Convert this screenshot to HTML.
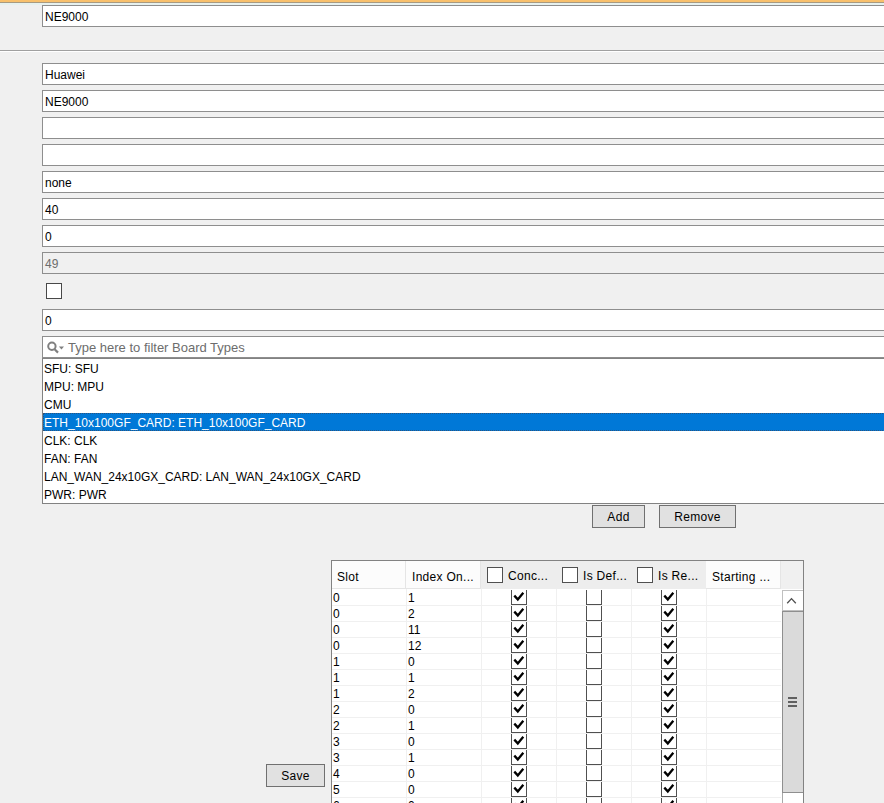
<!DOCTYPE html><html><head><meta charset="utf-8"><style>
*{margin:0;padding:0;box-sizing:border-box}
html,body{width:884px;height:803px;overflow:hidden;background:#f0f0f0;font-family:"Liberation Sans", sans-serif;font-size:12px;color:#000}
.a{position:absolute}
.tf{position:absolute;left:42px;width:900px;height:22px;border:1px solid #8e8e8e;background:#fff;white-space:nowrap}
.tf span{position:absolute;left:2px;top:4px;line-height:15px}
.dis{background:#f0f0f0;color:#6d6d6d}
.li{position:absolute;left:1px;height:18px;width:900px;line-height:20px;padding-left:1px;white-space:nowrap}
.btn{position:absolute;height:23px;border:1px solid #707070;background:#e1e1e1;text-align:center;line-height:23px;letter-spacing:0.3px}
.row{position:absolute;left:332px;width:449px;height:16px;border-bottom:1px solid #f0f0f0}
.c{position:absolute;top:0;height:15px;line-height:17px;white-space:nowrap}
.vl{position:absolute;top:589px;width:1px;height:214px;background:#f0f0f0}
.cb{position:absolute;top:0;width:16px;height:15px;border:1px solid #505050;border-top:none;background:#fff}
.hc{position:absolute;top:561px;height:28px}
.hcb{position:absolute;top:6px;width:16px;height:16px;border:1px solid #505050;background:#fff}
.ht{position:absolute;top:8px;line-height:16px;white-space:nowrap;letter-spacing:0.3px}
</style></head><body>
<div class="a" style="left:0;top:0;width:884px;height:2px;background:#f8c06c"></div>
<div class="a" style="left:0;top:2px;width:884px;height:1px;background:#a89a80"></div>
<div class="a" style="left:0;top:3px;width:884px;height:2px;background:#e6f1ef"></div>
<div class="tf" style="top:5px"><span>NE9000</span></div>
<div class="a" style="left:0;top:50px;width:884px;height:1px;background:#a0a0a0"></div>
<div class="a" style="left:0;top:51px;width:884px;height:1px;background:#fff"></div>
<div class="tf" style="top:63px"><span>Huawei</span></div>
<div class="tf" style="top:90px"><span>NE9000</span></div>
<div class="tf" style="top:117px"><span></span></div>
<div class="tf" style="top:144px"><span></span></div>
<div class="tf" style="top:171px"><span>none</span></div>
<div class="tf" style="top:198px"><span>40</span></div>
<div class="tf" style="top:225px"><span>0</span></div>
<div class="tf dis" style="top:252px"><span>49</span></div>
<div class="a" style="left:46px;top:283px;width:16px;height:16px;border:1px solid #484848;background:#fff"></div>
<div class="tf" style="top:309px"><span>0</span></div>
<div class="tf" style="top:336px"><svg class="a" style="left:3px;top:4px" width="20" height="14" viewBox="0 0 20 14"><circle cx="5.9" cy="5.3" r="3.7" fill="none" stroke="#808080" stroke-width="2"/><line x1="8.6" y1="8.2" x2="12" y2="11.6" stroke="#808080" stroke-width="2.2"/><path d="M12.9 5.5 L18 5.5 L15.45 8.5 Z" fill="#808080"/></svg><span style="left:25px;font-size:13px;color:#6d6d6d;top:3px">Type here to filter Board Types</span></div>
<div class="a" style="left:42px;top:358px;width:900px;height:146px;border:1px solid #828282;background:#fff">
<div class="li" style="left:0;top:0px">SFU: SFU</div>
<div class="li" style="left:0;top:18px">MPU: MPU</div>
<div class="li" style="left:0;top:36px">CMU</div>
<div class="li" style="left:0;top:54px;background:#0078d7;color:#fff;padding-left:0;border:1px dotted #2b5580;line-height:18px">ETH_10x100GF_CARD: ETH_10x100GF_CARD</div>
<div class="li" style="left:0;top:72px">CLK: CLK</div>
<div class="li" style="left:0;top:90px">FAN: FAN</div>
<div class="li" style="left:0;top:108px">LAN_WAN_24x10GX_CARD: LAN_WAN_24x10GX_CARD</div>
<div class="li" style="left:0;top:126px">PWR: PWR</div>
</div>
<div class="btn" style="left:592px;top:505px;width:53px">Add</div>
<div class="btn" style="left:659px;top:505px;width:77px">Remove</div>
<div class="btn" style="left:266px;top:764px;width:59px">Save</div>
<div class="a" style="left:331px;top:560px;width:473px;height:260px;border:1px solid #828282;background:#fff"></div>
<div class="hc" style="left:332px;width:471px;background:#f0f0f0"></div>
<div class="hc" style="left:332px;width:74px;background:#fcfcfc;border-bottom:1px solid #e5e5e5;border-right:1px solid #e5e5e5"><div class="ht" style="left:5px">Slot</div></div>
<div class="hc" style="left:406px;width:75px;background:#fcfcfc;border-bottom:1px solid #e5e5e5;border-right:1px solid #e5e5e5"><div class="ht" style="left:6px">Index On...</div></div>
<div class="hc" style="left:481px;width:75px;background:#ededed"><div class="hcb" style="left:6px"></div><div class="ht" style="left:27px;top:7px">Conc...</div></div>
<div class="hc" style="left:556px;width:75px;background:#ededed"><div class="hcb" style="left:6px"></div><div class="ht" style="left:27px;top:7px">Is Def...</div></div>
<div class="hc" style="left:631px;width:75px;background:#ededed"><div class="hcb" style="left:6px"></div><div class="ht" style="left:27px;top:7px">Is Re...</div></div>
<div class="hc" style="left:706px;width:75px;background:#fcfcfc;border-bottom:1px solid #e5e5e5;border-right:1px solid #e5e5e5"><div class="ht" style="left:6px">Starting ...</div></div>
<div class="row" style="top:590px">
<div class="c" style="left:1px">0</div><div class="c" style="left:76px">1</div>
<div class="cb" style="left:179px">
<svg class="a" style="left:-1px;top:0" width="16" height="15"><path d="M3.3 5.6 L6.8 9.4 L12.3 2.7" fill="none" stroke="#000" stroke-width="2.3"/></svg>
</div>
<div class="cb" style="left:254px">
</div>
<div class="cb" style="left:329px">
<svg class="a" style="left:-1px;top:0" width="16" height="15"><path d="M3.3 5.6 L6.8 9.4 L12.3 2.7" fill="none" stroke="#000" stroke-width="2.3"/></svg>
</div>
</div>
<div class="row" style="top:606px">
<div class="c" style="left:1px">0</div><div class="c" style="left:76px">2</div>
<div class="cb" style="left:179px">
<svg class="a" style="left:-1px;top:0" width="16" height="15"><path d="M3.3 5.6 L6.8 9.4 L12.3 2.7" fill="none" stroke="#000" stroke-width="2.3"/></svg>
</div>
<div class="cb" style="left:254px">
</div>
<div class="cb" style="left:329px">
<svg class="a" style="left:-1px;top:0" width="16" height="15"><path d="M3.3 5.6 L6.8 9.4 L12.3 2.7" fill="none" stroke="#000" stroke-width="2.3"/></svg>
</div>
</div>
<div class="row" style="top:622px">
<div class="c" style="left:1px">0</div><div class="c" style="left:76px">11</div>
<div class="cb" style="left:179px">
<svg class="a" style="left:-1px;top:0" width="16" height="15"><path d="M3.3 5.6 L6.8 9.4 L12.3 2.7" fill="none" stroke="#000" stroke-width="2.3"/></svg>
</div>
<div class="cb" style="left:254px">
</div>
<div class="cb" style="left:329px">
<svg class="a" style="left:-1px;top:0" width="16" height="15"><path d="M3.3 5.6 L6.8 9.4 L12.3 2.7" fill="none" stroke="#000" stroke-width="2.3"/></svg>
</div>
</div>
<div class="row" style="top:638px">
<div class="c" style="left:1px">0</div><div class="c" style="left:76px">12</div>
<div class="cb" style="left:179px">
<svg class="a" style="left:-1px;top:0" width="16" height="15"><path d="M3.3 5.6 L6.8 9.4 L12.3 2.7" fill="none" stroke="#000" stroke-width="2.3"/></svg>
</div>
<div class="cb" style="left:254px">
</div>
<div class="cb" style="left:329px">
<svg class="a" style="left:-1px;top:0" width="16" height="15"><path d="M3.3 5.6 L6.8 9.4 L12.3 2.7" fill="none" stroke="#000" stroke-width="2.3"/></svg>
</div>
</div>
<div class="row" style="top:654px">
<div class="c" style="left:1px">1</div><div class="c" style="left:76px">0</div>
<div class="cb" style="left:179px">
<svg class="a" style="left:-1px;top:0" width="16" height="15"><path d="M3.3 5.6 L6.8 9.4 L12.3 2.7" fill="none" stroke="#000" stroke-width="2.3"/></svg>
</div>
<div class="cb" style="left:254px">
</div>
<div class="cb" style="left:329px">
<svg class="a" style="left:-1px;top:0" width="16" height="15"><path d="M3.3 5.6 L6.8 9.4 L12.3 2.7" fill="none" stroke="#000" stroke-width="2.3"/></svg>
</div>
</div>
<div class="row" style="top:670px">
<div class="c" style="left:1px">1</div><div class="c" style="left:76px">1</div>
<div class="cb" style="left:179px">
<svg class="a" style="left:-1px;top:0" width="16" height="15"><path d="M3.3 5.6 L6.8 9.4 L12.3 2.7" fill="none" stroke="#000" stroke-width="2.3"/></svg>
</div>
<div class="cb" style="left:254px">
</div>
<div class="cb" style="left:329px">
<svg class="a" style="left:-1px;top:0" width="16" height="15"><path d="M3.3 5.6 L6.8 9.4 L12.3 2.7" fill="none" stroke="#000" stroke-width="2.3"/></svg>
</div>
</div>
<div class="row" style="top:686px">
<div class="c" style="left:1px">1</div><div class="c" style="left:76px">2</div>
<div class="cb" style="left:179px">
<svg class="a" style="left:-1px;top:0" width="16" height="15"><path d="M3.3 5.6 L6.8 9.4 L12.3 2.7" fill="none" stroke="#000" stroke-width="2.3"/></svg>
</div>
<div class="cb" style="left:254px">
</div>
<div class="cb" style="left:329px">
<svg class="a" style="left:-1px;top:0" width="16" height="15"><path d="M3.3 5.6 L6.8 9.4 L12.3 2.7" fill="none" stroke="#000" stroke-width="2.3"/></svg>
</div>
</div>
<div class="row" style="top:702px">
<div class="c" style="left:1px">2</div><div class="c" style="left:76px">0</div>
<div class="cb" style="left:179px">
<svg class="a" style="left:-1px;top:0" width="16" height="15"><path d="M3.3 5.6 L6.8 9.4 L12.3 2.7" fill="none" stroke="#000" stroke-width="2.3"/></svg>
</div>
<div class="cb" style="left:254px">
</div>
<div class="cb" style="left:329px">
<svg class="a" style="left:-1px;top:0" width="16" height="15"><path d="M3.3 5.6 L6.8 9.4 L12.3 2.7" fill="none" stroke="#000" stroke-width="2.3"/></svg>
</div>
</div>
<div class="row" style="top:718px">
<div class="c" style="left:1px">2</div><div class="c" style="left:76px">1</div>
<div class="cb" style="left:179px">
<svg class="a" style="left:-1px;top:0" width="16" height="15"><path d="M3.3 5.6 L6.8 9.4 L12.3 2.7" fill="none" stroke="#000" stroke-width="2.3"/></svg>
</div>
<div class="cb" style="left:254px">
</div>
<div class="cb" style="left:329px">
<svg class="a" style="left:-1px;top:0" width="16" height="15"><path d="M3.3 5.6 L6.8 9.4 L12.3 2.7" fill="none" stroke="#000" stroke-width="2.3"/></svg>
</div>
</div>
<div class="row" style="top:734px">
<div class="c" style="left:1px">3</div><div class="c" style="left:76px">0</div>
<div class="cb" style="left:179px">
<svg class="a" style="left:-1px;top:0" width="16" height="15"><path d="M3.3 5.6 L6.8 9.4 L12.3 2.7" fill="none" stroke="#000" stroke-width="2.3"/></svg>
</div>
<div class="cb" style="left:254px">
</div>
<div class="cb" style="left:329px">
<svg class="a" style="left:-1px;top:0" width="16" height="15"><path d="M3.3 5.6 L6.8 9.4 L12.3 2.7" fill="none" stroke="#000" stroke-width="2.3"/></svg>
</div>
</div>
<div class="row" style="top:750px">
<div class="c" style="left:1px">3</div><div class="c" style="left:76px">1</div>
<div class="cb" style="left:179px">
<svg class="a" style="left:-1px;top:0" width="16" height="15"><path d="M3.3 5.6 L6.8 9.4 L12.3 2.7" fill="none" stroke="#000" stroke-width="2.3"/></svg>
</div>
<div class="cb" style="left:254px">
</div>
<div class="cb" style="left:329px">
<svg class="a" style="left:-1px;top:0" width="16" height="15"><path d="M3.3 5.6 L6.8 9.4 L12.3 2.7" fill="none" stroke="#000" stroke-width="2.3"/></svg>
</div>
</div>
<div class="row" style="top:766px">
<div class="c" style="left:1px">4</div><div class="c" style="left:76px">0</div>
<div class="cb" style="left:179px">
<svg class="a" style="left:-1px;top:0" width="16" height="15"><path d="M3.3 5.6 L6.8 9.4 L12.3 2.7" fill="none" stroke="#000" stroke-width="2.3"/></svg>
</div>
<div class="cb" style="left:254px">
</div>
<div class="cb" style="left:329px">
<svg class="a" style="left:-1px;top:0" width="16" height="15"><path d="M3.3 5.6 L6.8 9.4 L12.3 2.7" fill="none" stroke="#000" stroke-width="2.3"/></svg>
</div>
</div>
<div class="row" style="top:782px">
<div class="c" style="left:1px">5</div><div class="c" style="left:76px">0</div>
<div class="cb" style="left:179px">
<svg class="a" style="left:-1px;top:0" width="16" height="15"><path d="M3.3 5.6 L6.8 9.4 L12.3 2.7" fill="none" stroke="#000" stroke-width="2.3"/></svg>
</div>
<div class="cb" style="left:254px">
</div>
<div class="cb" style="left:329px">
<svg class="a" style="left:-1px;top:0" width="16" height="15"><path d="M3.3 5.6 L6.8 9.4 L12.3 2.7" fill="none" stroke="#000" stroke-width="2.3"/></svg>
</div>
</div>
<div class="row" style="top:798px">
<div class="c" style="left:1px">6</div><div class="c" style="left:76px">0</div>
<div class="cb" style="left:179px">
<svg class="a" style="left:-1px;top:0" width="16" height="15"><path d="M3.3 5.6 L6.8 9.4 L12.3 2.7" fill="none" stroke="#000" stroke-width="2.3"/></svg>
</div>
<div class="cb" style="left:254px">
</div>
<div class="cb" style="left:329px">
<svg class="a" style="left:-1px;top:0" width="16" height="15"><path d="M3.3 5.6 L6.8 9.4 L12.3 2.7" fill="none" stroke="#000" stroke-width="2.3"/></svg>
</div>
</div>
<div class="vl" style="left:406px"></div>
<div class="vl" style="left:481px"></div>
<div class="vl" style="left:556px"></div>
<div class="vl" style="left:631px"></div>
<div class="vl" style="left:706px"></div>
<div class="a" style="left:781px;top:589px;width:22px;height:214px;background:#fff"></div>
<div class="a" style="left:782px;top:590px;width:21px;height:21px;border:1px solid #c0c0c0;border-right:none;background:#fff"><svg class="a" style="left:0;top:0" width="19" height="19"><path d="M4.2 12.3 L8.5 7.6 L12.8 12.3" fill="none" stroke="#505050" stroke-width="1.3"/></svg></div>
<div class="a" style="left:782px;top:611px;width:21px;height:182px;border:1px solid #8f8f8f;border-right:none;background:#dadada"><div class="a" style="left:5px;top:85px;width:9px;height:2px;background:#606060"></div><div class="a" style="left:5px;top:89px;width:9px;height:2px;background:#606060"></div><div class="a" style="left:5px;top:93px;width:9px;height:2px;background:#606060"></div></div>
<div class="a" style="left:782px;top:793px;width:1px;height:10px;background:#a8a8a8"></div>
</body></html>
